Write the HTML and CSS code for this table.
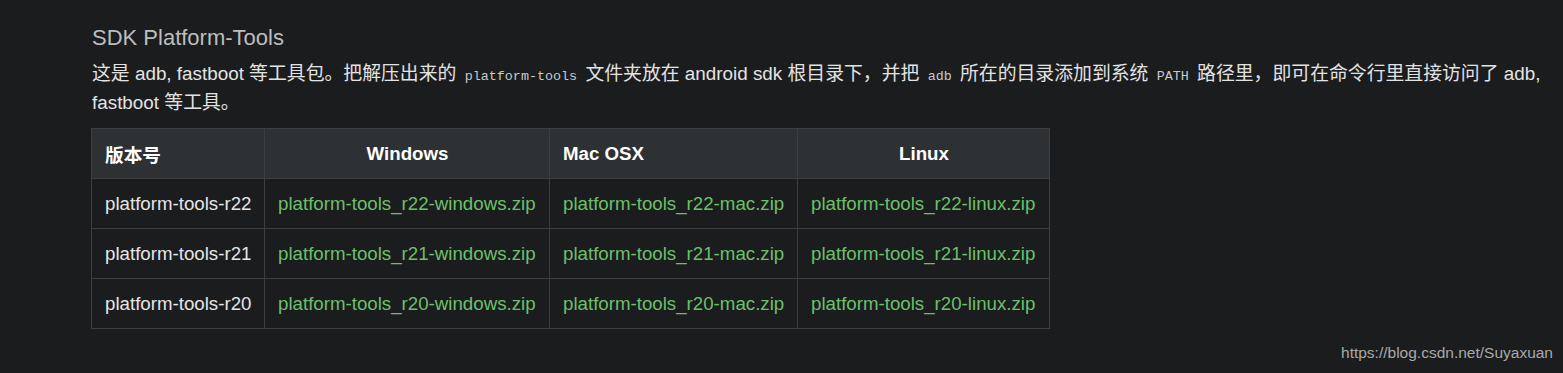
FILE: index.html
```html
<!DOCTYPE html>
<html lang="zh-CN">
<head>
<meta charset="utf-8">
<title>SDK Platform-Tools</title>
<link rel="stylesheet" href="styles.css">
</head>
<body>
<main class="content">
  <h3 class="title">SDK Platform-Tools</h3>
  <p class="desc">这是 adb, fastboot 等工具包。把解压出来的 <code>platform-tools</code> 文件夹放在 android sdk 根目录下，并把 <code>adb</code> 所在的目录添加到系统 <code>PATH</code> 路径里，即可在命令行里直接访问了 adb, fastboot 等工具。</p>
  <table class="dl">
    <thead>
      <tr>
        <th class="left">版本号</th>
        <th class="center">Windows</th>
        <th class="left">Mac OSX</th>
        <th class="center">Linux</th>
      </tr>
    </thead>
    <tbody>
      <tr>
        <td>platform-tools-r22</td>
        <td><a href="#">platform-tools_r22-windows.zip</a></td>
        <td><a href="#">platform-tools_r22-mac.zip</a></td>
        <td><a href="#">platform-tools_r22-linux.zip</a></td>
      </tr>
      <tr>
        <td>platform-tools-r21</td>
        <td><a href="#">platform-tools_r21-windows.zip</a></td>
        <td><a href="#">platform-tools_r21-mac.zip</a></td>
        <td><a href="#">platform-tools_r21-linux.zip</a></td>
      </tr>
      <tr>
        <td>platform-tools-r20</td>
        <td><a href="#">platform-tools_r20-windows.zip</a></td>
        <td><a href="#">platform-tools_r20-mac.zip</a></td>
        <td><a href="#">platform-tools_r20-linux.zip</a></td>
      </tr>
    </tbody>
  </table>
</main>
<div class="watermark">https://blog.csdn.net/Suyaxuan</div>
</body>
</html>
```
FILE: styles.css
```css
html, body {
  margin: 0;
  padding: 0;
  background: #1b1c1e;
  height: 100%;
}
body {
  font-family: "Liberation Sans", Arial, "Noto Sans CJK SC", sans-serif;
  color: #e3e3e3;
  position: relative;
  overflow: hidden;
}
.content {
  padding: 24px 8px 0 92px;
}
.title {
  margin: 0;
  font-size: 22px;
  font-weight: normal;
  line-height: 28px;
  color: #bdbdbd;
}
.desc {
  margin: 9px 0 0 0;
  font-size: 18.85px;
  line-height: 26px;
  color: #e3e3e3;
}
.desc code {
  font-family: "Liberation Mono", "DejaVu Sans Mono", monospace;
  font-size: 13.4px;
  color: #c9c9c9;
  padding: 0 3px;
}
.dl {
  margin-top: 12px;
  margin-left: -1px;
  border-collapse: collapse;
  table-layout: fixed;
  width: 958px;
  font-size: 18.7px;
  border: 1px solid #4a4a4a;
}
.dl th, .dl td {
  border: 1px solid #3e3e3e;
  height: 50px;
  padding: 0 12px 0 13px;
  box-sizing: border-box;
  white-space: nowrap;
  overflow: visible;
}
.dl thead tr {
  background: #2e3134;
}
.dl th {
  font-weight: bold;
  color: #ffffff;
}
.dl th.left { text-align: left; }
.dl th.center { text-align: center; }
.dl th:nth-child(1) { width: 173px; }
.dl th:nth-child(2) { width: 285px; }
.dl th:nth-child(3) { width: 248px; }
.dl th:nth-child(4) { width: 252px; }
.dl td {
  color: #e6e6e6;
}
.dl a {
  color: #6cc06b;
  text-decoration: none;
}
.watermark {
  position: absolute;
  right: 10px;
  bottom: 11px;
  font-size: 15.5px;
  color: #a9a9a9;
}
```
